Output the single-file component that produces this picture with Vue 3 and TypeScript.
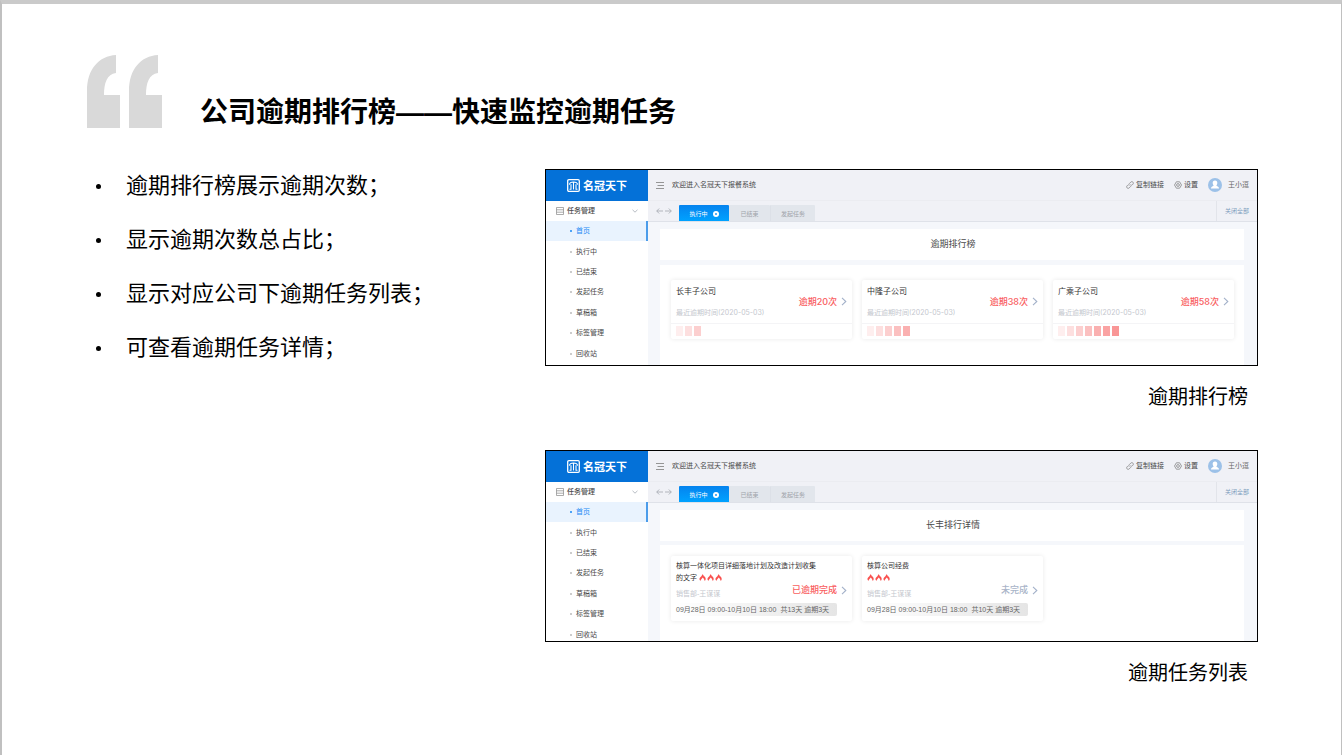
<script setup lang="ts">
interface Company {
  name: string
  date: string
  count: number
  level: number
}

interface Task {
  title: string
  dept: string
  period: string
  total: string
  status: string
  late: boolean
}

interface Screen {
  kind: 'rank' | 'tasks'
  heading: string
  caption: string
}

const points: string[] = [
  '逾期排行榜展示逾期次数；',
  '显示逾期次数总占比；',
  '显示对应公司下逾期任务列表；',
  '可查看逾期任务详情；',
]

const menu: string[] = ['首页', '执行中', '已结束', '发起任务', '草稿箱', '标签管理', '回收站']

const screens: Screen[] = [
  { kind: 'rank', heading: '逾期排行榜', caption: '逾期排行榜' },
  { kind: 'tasks', heading: '长丰排行详情', caption: '逾期任务列表' },
]

const companies: Company[] = [
  { name: '长丰子公司', date: '2020-05-03', count: 20, level: 3 },
  { name: '中隆子公司', date: '2020-05-03', count: 38, level: 5 },
  { name: '广乘子公司', date: '2020-05-03', count: 58, level: 7 },
]

const tasks: Task[] = [
  {
    title: '核算一体化项目详细落地计划及改造计划收集的文字',
    dept: '销售部-王谋谋',
    period: '09月28日 09:00-10月10日 18:00',
    total: '共13天 逾期3天',
    status: '已逾期完成',
    late: true,
  },
  {
    title: '核算公司经费',
    dept: '销售部-王谋谋',
    period: '09月28日 09:00-10月10日 18:00',
    total: '共10天 逾期3天',
    status: '未完成',
    late: false,
  },
]
</script>

<template>
  <main class="slide">
    <header class="head">
      <svg class="quote" viewBox="0 0 75 73" aria-hidden="true">
        <path d="M29 0V18C20 19 17 28 17 40H33V73H0V36C0 14 12 1 29 0Z" />
        <path d="M71 0V18C62 19 59 28 59 40H75V73H42V36C42 14 54 1 71 0Z" />
      </svg>
      <h1>公司逾期排行榜——快速监控逾期任务</h1>
    </header>

    <div class="body">
      <ul class="points">
        <li v-for="p in points" :key="p">{{ p }}</li>
      </ul>

      <div class="figures">
        <figure v-for="s in screens" :key="s.kind" :class="['figure', s.kind]">
          <div class="shot">
            <aside class="side">
              <div class="brand">
                <svg viewBox="0 0 13 13" class="brand-mark" aria-hidden="true">
                  <rect x="0.7" y="0.7" width="11.6" height="11.6" rx="1.2" fill="none" stroke="#fff" stroke-width="1.3" />
                  <path d="M2.4 5.6C2.700 3.400 4.800 3 6.500 3S10.300 3.400 10.600 5.600M4 10.600V5.200M6.500 10.600V3.200M9 10.600V5.200M2.500 10.300H4.500M8.500 10.300H10.500" fill="none" stroke="#fff" stroke-width="1.100" />
                </svg>
                <span>名冠天下</span>
              </div>
              <button type="button" class="group">
                <svg viewBox="0 0 8 8" class="ico8" aria-hidden="true">
                  <path d="M.5 .5H7.5V7.5H.5ZM.5 2.8H7.5M.5 5.2H7.5" fill="none" stroke="#888" stroke-width=".7" />
                </svg>
                <span>任务管理</span>
                <svg viewBox="0 0 6 6" class="fold" aria-hidden="true">
                  <path d="M.5 1.8L3 4.2L5.5 1.8" fill="none" stroke="#9aa0aa" stroke-width=".7" />
                </svg>
              </button>
              <nav class="menu">
                <a v-for="(m, i) in menu" :key="m" href="#" :class="{ on: i === 0 }">{{ m }}</a>
              </nav>
            </aside>

            <section class="work">
              <div class="topbar">
                <svg viewBox="0 0 8 8" class="ico8" aria-hidden="true">
                  <path d="M0 1.500H8M1.500 4.500H8M0 7.500H8" fill="none" stroke="#8a8a8a" stroke-width=".9" />
                </svg>
                <span class="welcome">欢迎进入名冠天下报餐系统</span>
                <a href="#" class="tool">
                  <svg viewBox="0 0 8 8" class="ico8" aria-hidden="true">
                    <path d="M3.3 4.7C2.6 4 2.7 3.2 3.3 2.6L4.8 1.1C5.4 .5 6.3 .5 6.9 1.1S7.5 2.6 6.9 3.2L6 4.1M4.7 3.3C5.4 4 5.3 4.8 4.7 5.4L3.2 6.9C2.6 7.5 1.7 7.5 1.1 6.9S.5 5.4 1.1 4.8L2 3.9" fill="none" stroke="#777" stroke-width=".7" />
                  </svg>
                  <span>复制链接</span>
                </a>
                <a href="#" class="tool set">
                  <svg viewBox="0 0 8 8" class="ico8" aria-hidden="true">
                    <path d="M2.4 .8H5.6L7.5 4L5.6 7.2H2.4L.5 4Z" fill="none" stroke="#777" stroke-width=".7" stroke-linejoin="round" />
                    <circle cx="4" cy="4" r="1.4" fill="none" stroke="#777" stroke-width=".7" />
                  </svg>
                  <span>设置</span>
                </a>
                <svg viewBox="0 0 14 14" class="avatar" aria-hidden="true">
                  <circle cx="7" cy="7" r="7" fill="#9cc1e8" />
                  <path d="M7 2.6C8.6 2.6 9.4 3.8 9.3 5.1C9.2 6.5 8.500 7.200 8.300 7.600C8.700 8.300 11 8.400 11.100 10.600H2.900C3 8.400 5.300 8.300 5.700 7.600C5.500 7.200 4.800 6.500 4.700 5.100C4.600 3.800 5.400 2.600 7 2.600Z" fill="#fff" />
                </svg>
                <span class="user">王小逗</span>
              </div>

              <div class="tabs">
                <svg viewBox="0 0 16 8" class="arrows" aria-hidden="true">
                  <path d="M7 4H.8M3.200 1.500L.7 4L3.200 6.500M9 4H15.200M12.800 1.500L15.300 4L12.800 6.500" fill="none" stroke="#a2a7af" stroke-width=".8" />
                </svg>
                <button type="button" class="tab active">
                  <span>执行中</span>
                  <svg viewBox="0 0 6 6" class="close" aria-hidden="true">
                    <circle cx="3" cy="3" r="3" fill="#fff" />
                    <path d="M2 2L4 4M4 2L2 4" stroke="#0a90f6" stroke-width=".7" />
                  </svg>
                </button>
                <button type="button" class="tab second">已结束</button>
                <button type="button" class="tab third">发起任务</button>
                <button type="button" class="close-all">关闭全部</button>
              </div>

              <div class="content">
                <h2>{{ s.heading }}</h2>

                <div v-if="s.kind === 'rank'" class="panel">
                  <article v-for="c in companies" :key="c.name" class="card">
                    <div class="card-main">
                      <div class="info">
                        <h3>{{ c.name }}</h3>
                        <p class="date">最近逾期时间({{ c.date }})</p>
                      </div>
                      <a href="#" class="more red">
                        <span>逾期{{ c.count }}次</span>
                        <svg viewBox="0 0 6 9" class="chev" aria-hidden="true">
                          <path d="M1 .8L4.800 4.500L1 8.200" fill="none" stroke="#a3b1c9" stroke-width="1.100" />
                        </svg>
                      </a>
                    </div>
                    <div class="bars">
                      <i v-for="n in c.level" :key="n" :class="'b' + n"></i>
                    </div>
                  </article>
                </div>

                <div v-else class="panel">
                  <article v-for="t in tasks" :key="t.title" class="card task">
                    <h3>
                      <span class="name">{{ t.title }}</span>
                      <br v-if="!t.late" />
                      <span class="fires">
                        <svg v-for="n in 3" :key="n" viewBox="0 0 7 7" aria-hidden="true">
                          <path d="M3.300 .3C4.500 1 4.900 1.900 5 2.700L5.500 2.300C6.300 3.300 7 4.600 6.600 5.700C6.400 6.300 6 6.600 5.500 6.800C5.500 5.600 4.800 4.500 3.600 3.500C3.300 4.700 1.700 5.300 1.700 6.800C.4 6.200 .1 4.900 .9 3.800C1.700 2.700 3.200 2 3.300 .3Z" fill="#f9514f" />
                        </svg>
                      </span>
                    </h3>
                    <div class="mid">
                      <p class="dept">{{ t.dept }}</p>
                      <a href="#" :class="['more', t.late ? 'red' : 'grey']">
                        <span>{{ t.status }}</span>
                        <svg viewBox="0 0 6 9" class="chev" aria-hidden="true">
                          <path d="M1 .8L4.800 4.500L1 8.200" fill="none" stroke="#a3b1c9" stroke-width="1.100" />
                        </svg>
                      </a>
                    </div>
                    <p class="period">
                      <span>{{ t.period }}</span>
                      <span>{{ t.total }}</span>
                    </p>
                  </article>
                </div>
              </div>
            </section>
          </div>
          <figcaption>{{ s.caption }}</figcaption>
        </figure>
      </div>
    </div>
  </main>
</template>

<style>
body {
  margin: 0;
  background: #fff;
}
</style>

<style scoped>
* {
  box-sizing: border-box;
}

h1,
h2,
h3,
p,
ul,
figure {
  margin: 0;
  padding: 0;
}

a {
  color: inherit;
  text-decoration: none;
}

button {
  margin: 0;
  padding: 0;
  border: 0;
  background: none;
  font: inherit;
  color: inherit;
}

svg {
  display: block;
  flex: none;
}

.slide {
  min-height: 100vh;
  padding: 51px 83px 0 85px;
  border: solid #c0c0c0;
  border-width: 4px 1px 0 2px;
  border-top-color: #cacaca;
  background: #fff;
  color: #000;
  font-family: "Liberation Sans", "Noto Sans CJK SC", sans-serif;
}

.head {
  display: flex;
  align-items: flex-end;
  gap: 38px;
}

.quote {
  width: 75px;
  height: 73px;
  fill: #d9d9d9;
}

h1 {
  font-size: 28px;
  line-height: 30px;
  font-weight: 700;
}

.body {
  display: grid;
  grid-template-columns: minmax(0, 458fr) minmax(0, 713fr);
  padding-top: 41px;
}

.points {
  padding-top: 2px;
  list-style: none;
  font-size: 22px;
  line-height: 30px;
  display: flex;
  flex-direction: column;
  gap: 24px;
}

.points li {
  display: flex;
  align-items: center;
}

.points li::before {
  content: "";
  width: 5px;
  height: 5px;
  margin: 0 25px 0 9px;
  border-radius: 50%;
  background: #000;
}

.figures {
  display: flex;
  flex-direction: column;
  gap: 38px;
}

.shot {
  display: flex;
  height: 197px;
  overflow: hidden;
  border: 1px solid #000;
  background: #fff;
  font-size: 7px;
  line-height: 12px;
  color: #4a4a4a;
}

.tasks .shot {
  height: 192px;
}

figcaption {
  padding: 16px 10px 0 0;
  font-size: 20px;
  line-height: 30px;
  text-align: right;
}

/* sidebar */
.side {
  flex: none;
  width: 102px;
  background: #fff;
}

.brand {
  display: flex;
  align-items: center;
  justify-content: center;
  gap: 3px;
  height: 31px;
  background: #0471d8;
  color: #fff;
  font-size: 11px;
  font-weight: 700;
}

.brand-mark {
  width: 13px;
  height: 13px;
}

.group {
  display: flex;
  align-items: center;
  gap: 3px;
  width: 100%;
  height: 20px;
  padding: 0 10px;
  font-weight: 500;
}

.ico8 {
  width: 8px;
  height: 8px;
}

.fold {
  width: 6px;
  height: 6px;
  margin-left: auto;
}

.menu {
  display: flex;
  flex-direction: column;
  height: 143px;
}

.menu a {
  flex: 1;
  display: flex;
  align-items: center;
  gap: 4px;
  padding-left: 24px;
}

.menu a::before {
  content: "";
  width: 2px;
  height: 2px;
  border-radius: 1px;
  background: #bbb;
}

.menu .on {
  border-right: 2px solid #4b9cea;
  background: #e9f3fe;
  color: #1989f5;
}

.menu .on::before {
  background: #1989f5;
}

/* work area */
.work {
  flex: 1;
  min-width: 0;
  display: flex;
  flex-direction: column;
  background: #f5f7fb;
}

.topbar {
  flex: none;
  display: flex;
  align-items: center;
  height: 31px;
  padding: 0 8px;
  border-bottom: 1px solid #ebecf1;
  background: #f0f1f6;
}

.welcome {
  margin: 0 auto 0 8px;
}

.tool {
  display: flex;
  align-items: center;
  gap: 2px;
}

.set {
  margin: 0 10px;
}

.avatar {
  width: 14px;
  height: 14px;
  margin-right: 6px;
}

.user {
  color: #666;
}

.tabs {
  flex: none;
  display: flex;
  align-items: flex-end;
  height: 21px;
  padding-left: 8px;
  border-bottom: 1px solid #dfe2e9;
  background: #f0f1f6;
  font-size: 6px;
  color: #a0a4aa;
}

.arrows {
  width: 16px;
  height: 8px;
  margin: 0 7px 6px 0;
}

.tab {
  height: 16px;
  padding-top: 1px;
  background: #e2e6ec;
  border-radius: 1px 1px 0 0;
}

.active {
  display: flex;
  align-items: center;
  justify-content: center;
  gap: 5px;
  width: 50px;
  background: linear-gradient(#0583ee, #00a2ff);
  color: #fff;
}

.close {
  width: 6px;
  height: 6px;
}

.second {
  width: 41px;
}

.third {
  width: 45px;
  border-left: 1px solid #dce0e7;
}

.close-all {
  align-self: stretch;
  width: 41px;
  margin-left: auto;
  border-left: 1px solid #e2e4ea;
  color: #7d9dbd;
}

.content {
  flex: 1;
  display: flex;
  flex-direction: column;
  gap: 5px;
  padding: 7px 13px 0 12px;
}

.tasks .content {
  gap: 4px;
}

h2 {
  padding-left: 2px;
  background: #fff;
  font-size: 9px;
  line-height: 31px;
  font-weight: 400;
  text-align: center;
}

.panel {
  flex: 1;
  display: grid;
  grid-template-columns: repeat(3, minmax(0, 1fr));
  align-items: start;
  gap: 10px;
  padding: 15px 10px 0 11px;
  background: #fff;
}

.tasks .panel {
  padding-top: 11px;
}

.card {
  border-radius: 2px;
  background: #fff;
  box-shadow: 0 0 5px rgba(0, 0, 0, 0.09);
}

.card h3 {
  font-size: 7px;
  font-weight: 400;
  color: #333;
}

.card-main {
  display: flex;
  align-items: center;
  justify-content: space-between;
  height: 44px;
  padding: 0 5px;
  border-bottom: 1px solid #f4f4f6;
}

.info {
  display: flex;
  flex-direction: column;
  gap: 9px;
  padding-top: 2px;
}

.card .info h3 {
  font-size: 8px;
}

.date,
.dept {
  color: #c4c7ce;
}

.date {
  font-family: Inter, "Noto Sans CJK SC", sans-serif;
}

.more {
  display: flex;
  align-items: center;
  gap: 4px;
  font-family: Inter, "Noto Sans CJK SC", sans-serif;
  font-size: 9px;
  font-weight: 500;
  white-space: nowrap;
}

.red {
  color: #f9605f;
}

.grey {
  color: #a9b4c8;
}

.chev {
  width: 6px;
  height: 9px;
}

.bars {
  display: flex;
  gap: 2px;
  padding: 2px 5px 3px;
}

.bars i {
  width: 7px;
  height: 10px;
}

.b1 { background: #feeeee; }
.b2 { background: #fddfdf; }
.b3 { background: #fccfcf; }
.b4 { background: #fbc0c0; }
.b5 { background: #fab0b0; }
.b6 { background: #faa3a3; }
.b7 { background: #f99696; }

.task {
  padding: 4px 5px 5px;
}

.task h3 {
  min-height: 24px;
  max-width: 146px;
}

.name {
  margin-right: 2px;
}

.fires {
  display: inline-flex;
  gap: 1px;
  vertical-align: -1px;
}

.fires svg {
  width: 7px;
  height: 7px;
}

.mid {
  display: flex;
  align-items: flex-start;
  justify-content: space-between;
  height: 19px;
}

.dept {
  padding-top: 4px;
}

.period {
  display: flex;
  gap: 4px;
  margin-right: 10px;
  border-radius: 2px;
  background: linear-gradient(90deg, #fff, #e5e5e5);
  line-height: 13px;
  white-space: nowrap;
  color: #666;
}
</style>
